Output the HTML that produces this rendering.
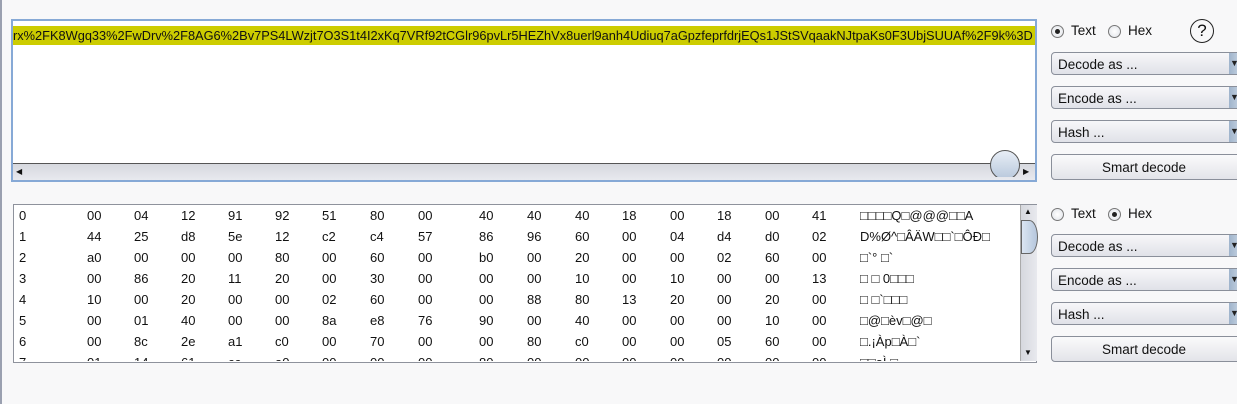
<!DOCTYPE html>
<html><head><meta charset="utf-8"><style>
body{margin:0;width:1237px;height:404px;background:#f8f8f9;position:relative;overflow:hidden;font-family:"Liberation Sans",Arial,sans-serif;font-size:12px;color:#111}
.abs{position:absolute}
.lb{left:0;top:0;width:2px;height:404px;background:#9aa0b0}
.ta{left:11px;top:19px;width:1022px;height:159px;border:2px solid #86a9d6;background:#fff}
.hl{left:13px;top:26px;width:1022px;height:19px;background:#cccc00;white-space:nowrap;overflow:hidden;line-height:19px;font-size:12.8px}
.hs{left:13px;top:163px;width:1022px;height:16px;background:linear-gradient(#d6d8de,#e8e9ee);border-top:1px solid #555}
.hx{left:13px;top:204px;width:1022px;height:157px;border:1px solid #8e929c;background:#fff;overflow:hidden}
.vs{left:1020px;top:205px;width:16px;height:156px;background:linear-gradient(90deg,#d6d8de,#e8e9ee);border-left:1px solid #aaa}
.r{position:absolute;height:21px;line-height:21px;font-size:13px}
.dd{position:absolute;left:1051px;width:200px;height:23px;border:1px solid #8a8f9a;border-radius:4px;background:linear-gradient(#f7f7f9,#e0e2e8);font-size:13.5px;line-height:23px;padding-left:6px;box-sizing:border-box}
.dd:after{content:"";position:absolute;left:177px;top:0;width:12px;height:21px;background:linear-gradient(90deg,#9fb4cc,#c8d4e2)}
.arrow{position:absolute;left:1230px;font-size:9px;color:#222}
.btn{position:absolute;left:1051px;width:200px;height:26px;border:1px solid #8a8f9a;border-radius:4px;background:linear-gradient(#fafafb,#e3e4e9);font-size:13.5px;text-align:center;line-height:25px;box-sizing:border-box;padding-right:14px}
.rad{position:absolute;width:11px;height:11px;border:1px solid #777;border-radius:50%;background:radial-gradient(#fff,#dfe2e8)}
.rad.on:after{content:"";position:absolute;left:3px;top:3px;width:5px;height:5px;border-radius:50%;background:#222}
.lab{position:absolute;font-size:13.5px}
</style></head><body>
<div class="abs lb"></div>
<div class="abs ta"></div>
<div class="abs hl">rx%2FK8Wgq33%2FwDrv%2F8AG6%2Bv7PS4LWzjt7O3S1t4I2xKq7VRf92tCGlr96pvLr5HEZhVx8uerl9anh4Udiuq7aGpzfeprfdrjEQs1JStSVqaakNJtpaKs0F3UbjSUUAf%2F9k%3D</div>
<div class="abs hs"></div>
<div class="abs" style="left:16px;top:167px;font-size:8px">◀</div>
<div class="abs" style="left:1023px;top:167px;font-size:8px">▶</div>
<div class="abs" style="left:990px;top:150px;width:28px;height:28px;border:1px solid #555;border-radius:50%;background:linear-gradient(#e8eef6,#b8c8dc);clip-path:inset(0 0 3px 0)"></div>

<div class="abs hx"></div>
<div class="abs vs"></div>
<div class="abs" style="left:1024px;top:207px;font-size:8px">▲</div>
<div class="abs" style="left:1024px;top:348px;font-size:8px">▼</div>
<div class="abs" style="left:1021px;top:220px;width:15px;height:32px;border:1px solid #666;border-radius:0 50% 50% 0/0 50% 50% 0;background:linear-gradient(90deg,#dbe5f2,#b5c6dc)"></div>

<div class="rad on" style="left:1051px;top:25px"></div><div class="lab" style="left:1071px;top:23px">Text</div>
<div class="rad" style="left:1108px;top:25px"></div><div class="lab" style="left:1128px;top:23px">Hex</div>
<div class="abs" style="left:1190px;top:19px;width:22px;height:22px;border:1.5px solid #222;border-radius:50%;text-align:center;line-height:22px;font-size:17px">?</div>
<div class="dd" style="top:52px">Decode as ...</div><div class="arrow" style="top:58px">▼</div>
<div class="dd" style="top:86px">Encode as ...</div><div class="arrow" style="top:92px">▼</div>
<div class="dd" style="top:120px">Hash ...</div><div class="arrow" style="top:126px">▼</div>
<div class="btn" style="top:154px">Smart decode</div>

<div class="rad" style="left:1051px;top:208px"></div><div class="lab" style="left:1071px;top:206px">Text</div>
<div class="rad on" style="left:1108px;top:208px"></div><div class="lab" style="left:1128px;top:206px">Hex</div>
<div class="dd" style="top:234px">Decode as ...</div><div class="arrow" style="top:240px">▼</div>
<div class="dd" style="top:268px">Encode as ...</div><div class="arrow" style="top:274px">▼</div>
<div class="dd" style="top:302px">Hash ...</div><div class="arrow" style="top:308px">▼</div>
<div class="btn" style="top:336px">Smart decode</div>

<div class="abs" style="left:14px;top:205px;width:1006px;height:156px;overflow:hidden">
<div style="position:relative;left:-14px;top:-205px">
<div class="r" style="top:205px;left:19px">0</div><div class="r" style="top:226px;left:19px">1</div><div class="r" style="top:247px;left:19px">2</div><div class="r" style="top:268px;left:19px">3</div><div class="r" style="top:289px;left:19px">4</div><div class="r" style="top:310px;left:19px">5</div><div class="r" style="top:331px;left:19px">6</div><div class="r" style="top:352px;left:19px">7</div>
<script>
var X=[87,134,181,228,275,322,370,418,479,527,575,622,670,717,765,812];
var D=["00 04 12 91 92 51 80 00 40 40 40 18 00 18 00 41","44 25 d8 5e 12 c2 c4 57 86 96 60 00 04 d4 d0 02","a0 00 00 00 80 00 60 00 b0 00 20 00 00 02 60 00","00 86 20 11 20 00 30 00 00 00 10 00 10 00 00 13","10 00 20 00 00 02 60 00 00 88 80 13 20 00 20 00","00 01 40 00 00 8a e8 76 90 00 40 00 00 00 10 00","00 8c 2e a1 c0 00 70 00 00 80 c0 00 00 05 60 00","01 14 61 cc a0 00 00 00 80 00 00 00 00 00 00 00"];
var T=["□□□□Q□@@@□□A","D%Ø^□ÂÄW□□`□ÔÐ□"," □`° □`","□ □ 0□□□","□ □`□□□","□@□èv□@□","□.¡Àp□À□`","□□aÌ □"];
var h="";
for(var i=0;i<8;i++){var c=D[i].split(" ");for(var j=0;j<16;j++)h+='<div class="r" style="top:'+(205+21*i)+'px;left:'+X[j]+'px">'+c[j]+'</div>';h+='<div class="r" style="top:'+(205+21*i)+'px;left:860px">'+T[i]+'</div>';}
document.write(h);
</script>
</div></div>
</body></html>
